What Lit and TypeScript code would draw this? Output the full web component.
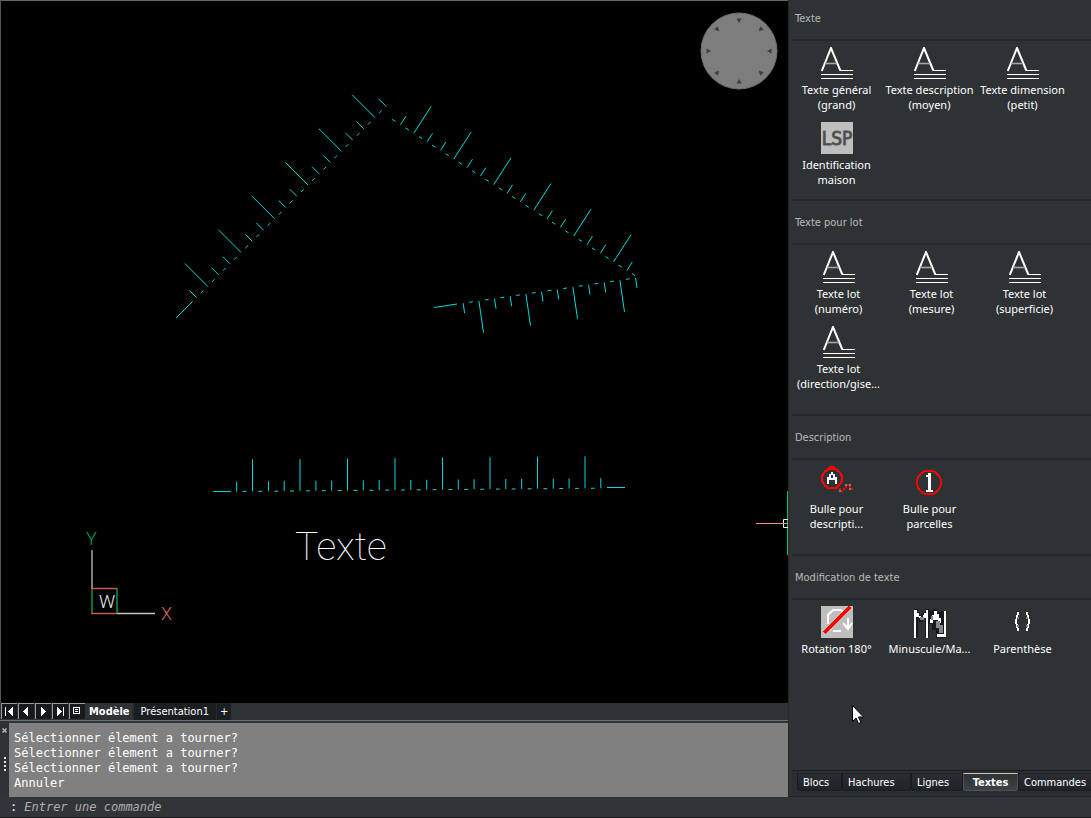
import { LitElement, html, svg, css, type TemplateResult, type SVGTemplateResult } from "lit";
import { customElement, property, state } from "lit/decorators.js";
import { classMap } from "lit/directives/class-map.js";

type Point = [number, number];

interface Ruler {
  origin: Point; // foot of the first tick
  step: Point; // distance between two ticks
  normal: Point; // unit direction of the ticks
  ticks: number;
  dashFrom: number;
  dashTo: number;
  ends: [Point, Point][];
}

interface Tool {
  icon: string;
  lines: string[];
}

interface Section {
  title: string;
  kind: string;
  tools: Tool[];
}

const RULERS: Ruler[] = [
  {
    origin: [196.5, 297.5], step: [11.15, -11.25], normal: [-0.71, -0.71],
    ticks: 18, dashFrom: 0, dashTo: 16, ends: [[[176, 318], [192.5, 301.5]]],
  },
  {
    origin: [400.5, 124.7], step: [13.32, 8.57], normal: [0.54, -0.84],
    ticks: 18, dashFrom: -1, dashTo: 17, ends: [],
  },
  {
    origin: [463.2, 303.2], step: [15.67, -2.3], normal: [0.145, 0.99],
    ticks: 12, dashFrom: 0, dashTo: 10, ends: [[[434, 307.5], [457, 304]]],
  },
  {
    origin: [236.7, 491.5], step: [15.83, -0.145], normal: [0, -1],
    ticks: 24, dashFrom: 0, dashTo: 22,
    ends: [[[213, 491.6], [231, 491.4]], [[607, 487.5], [625, 487.5]]],
  },
];

const SECTIONS: Section[] = [
  {
    title: "Texte", kind: "first",
    tools: [
      { icon: "text", lines: ["Texte général", "(grand)"] },
      { icon: "text", lines: ["Texte description", "(moyen)"] },
      { icon: "text", lines: ["Texte dimension", "(petit)"] },
      { icon: "lsp", lines: ["Identification", "maison"] },
    ],
  },
  {
    title: "Texte pour lot", kind: "inset",
    tools: [
      { icon: "text", lines: ["Texte lot", "(numéro)"] },
      { icon: "text", lines: ["Texte lot", "(mesure)"] },
      { icon: "text", lines: ["Texte lot", "(superficie)"] },
      { icon: "text", lines: ["Texte lot", "(direction/gise..."] },
    ],
  },
  {
    title: "Description", kind: "",
    tools: [
      { icon: "bubble", lines: ["Bulle pour", "descripti..."] },
      { icon: "parcel", lines: ["Bulle pour", "parcelles"] },
    ],
  },
  {
    title: "Modification de texte", kind: "",
    tools: [
      { icon: "rotate", lines: ["Rotation 180°"] },
      { icon: "case", lines: ["Minuscule/Ma..."] },
      { icon: "paren", lines: ["Parenthèse"] },
    ],
  },
];

const ICONS: Record<string, SVGTemplateResult> = {
  text: svg`
    <path d="M0.8 24 L10 1 L19.3 23.5" fill="none" stroke="#fff" stroke-width="2" />
    <path d="M4 16.5H16" stroke="#a4a6a8" stroke-width="1.6" />
    <path d="M19 23.5H32M0 27.5H32M0 31.5H32" stroke="#fff" />`,
  lsp: svg`
    <rect width="32" height="32" fill="#bebebe" />
    <text x="16" y="23" text-anchor="middle" font-family="DejaVu Sans Condensed, DejaVu Sans, sans-serif"
      font-size="19" fill="#3e3e3e" stroke="#5a5a5a">LSP</text>`,
  bubble: svg`
    <g shape-rendering="crispEdges">
      <circle cx="11" cy="12.5" r="10" fill="none" stroke="#f00" stroke-width="2" />
      <path d="M8 0h6v3h-6z" fill="#f00" />
      <path d="M10 6h2v2h2v3h2v7h-2v-4h-6v4h-2v-7h2v-3h2zM10 9h2v3h-2z" fill="#fff" fill-rule="evenodd" />
      <path d="M18 22h2v2h2v2h-2v-2h-2zM22 22h2v2h-2zM24 20h2v2h-2zM25 18h4v2h-4zM28 20h2v2h-2zM30 22h2v2h-2z" fill="#f00" />
      <path d="M18 24h2v2h-2zM24 18h2v2h-2zM28 18h2v2h-2zM28 22h2v2h-2z" fill="#808080" />
    </g>`,
  parcel: svg`
    <g shape-rendering="crispEdges">
      <circle cx="15" cy="16.5" r="12" fill="none" stroke="#f00" stroke-width="2" />
      <path d="M14 7h3v17h2v2h-7v-2h2v-13h-2v-2h2z" fill="#fff" />
    </g>`,
  rotate: svg`
    <rect width="32" height="32" fill="#bebebe" />
    <path d="M12 25H20M7 18V9L12 4H20L25 8M10 24L8 22" fill="none" stroke="#fff" stroke-width="2" />
    <path d="M27 12V23M22 17L27 23L31 17" fill="none" stroke="#fff" stroke-width="2" />
    <path d="M3 27L29 1" stroke="#f00" stroke-width="3.5" shape-rendering="crispEdges" />`,
  case: svg`
    <g shape-rendering="crispEdges">
      <path d="M0 3h4v3h2v3h2v-3h3v-3h5v2h3v-2h4v3h4v-1h5v27h-10v-8h-4v-6h-3v13h-4v-19h-2v4h-4v-4h-1v19h-4z" fill="#17191b" />
      <path d="M0 4h3v3h2v4h-3v21h-2zM12 4h2v28h-2v-20h-2v-5h2zM5 10h2v2h-2zM9 9h2v2h-2zM20 5h3v3h2v4h2v5h-3v-3h-5v3h-3v-4h2v-4h2zM30 5h2v26h-9v-3h7z" fill="#fff" />
      <path d="M6 11h4v3h-4zM22 15h4v4h3v8h-4v-5h-3zM17 10h2v4h-2z" fill="#858789" />
    </g>`,
  paren: svg`
    <g shape-rendering="crispEdges">
      <path d="M10 6h2v3h-1v4h-1v5h1v4h1v3h-2v-3h-1v-4h-1v-5h1v-4h1zM19 6h2v3h1v4h1v5h-1v4h-1v3h-2v-3h1v-4h1v-5h-1v-4h-1z" fill="#fff" />
      <path d="M10 11h2v2h-2zM10 19h2v2h-2zM19 11h2v2h-2zM19 19h2v2h-2z" fill="#808284" />
    </g>`,
};

function rulerPath(r: Ruler): string {
  const parts: string[] = [];
  const line = (a: Point, b: Point) =>
    parts.push(`M${a[0].toFixed(1)} ${a[1].toFixed(1)}L${b[0].toFixed(1)} ${b[1].toFixed(1)}`);
  const at = (k: number): Point => [r.origin[0] + r.step[0] * k, r.origin[1] + r.step[1] * k];
  for (let k = 0; k < r.ticks; k++) {
    const length = k % 3 === 1 ? 32 : 10;
    const [x, y] = at(k);
    line([x, y], [x + r.normal[0] * length, y + r.normal[1] * length]);
  }
  for (let k = r.dashFrom; k <= r.dashTo; k++) line(at(k + 0.38), at(k + 0.62));
  for (const [a, b] of r.ends) line(a, b);
  return parts.join("");
}

@customElement("cad-drawing")
export class CadDrawing extends LitElement {
  static styles = css`
    :host { display: block; position: relative; overflow: hidden; background: #000; border-top: 1px solid #666; border-left: 1px solid #555; }
    .sheet { position: absolute; top: -1px; left: -1px; width: 100%; height: 100%; overflow: visible; }
    .strokes { fill: none; stroke: #00dcdc; }
    .word { font: 100 39px Roboto, sans-serif; fill: #fff; }
    .axis { font: 300 18px Roboto, sans-serif; }
    .wheel { position: absolute; top: 11px; right: 10px; width: 78px; height: 78px; padding: 0; border: 0; background: none; }
    .wheel svg { display: block; }
  `;

  render() {
    return html`
      <svg class="sheet" role="img" aria-label="Dessin">
        ${RULERS.map((r) => svg`<path class="strokes" d=${rulerPath(r)} />`)}
        <text class="word" x="295" y="560">Texte</text>
        <g fill="none">
          <path d="M92 550V588" stroke="#aaa" stroke-width="1.5" />
          <path d="M117 613.5H155" stroke="#c4c4c4" stroke-width="1.5" />
          <path d="M92 588V613M117 588V613" stroke="#00994d" stroke-width="1.5" />
          <path d="M91 588.5H117M91 613.5H117" stroke="#c85a5a" stroke-width="1.5" />
        </g>
        <text class="axis" x="86" y="545" fill="#00a551">Y</text>
        <text class="axis" x="161" y="620" fill="#d26464">X</text>
        <text class="axis" x="99" y="608" fill="#eee">W</text>
        <path d="M787.5 491V555" stroke="#00c864" />
        <path d="M788 519.5H783.5V527.5H788" stroke="#fff" fill="none" />
        <path d="M756 523.5H788" stroke="#ff8c82" />
      </svg>
      <button class="wheel" aria-label="Navigation">
        <svg width="78" height="78" viewBox="-39 -39 78 78">
          <circle r="38" fill="#7d7d7d" stroke="#707070" />
          ${[0, 45, 90, 135, 180, 225, 270, 315].map(
            (a) => svg`<path transform="rotate(${a})" d="M-2.5 -32.5H2.5L0 -28Z" fill="#3c3f41" />`,
          )}
        </svg>
      </button>`;
  }
}

@customElement("layout-bar")
export class LayoutBar extends LitElement {
  static styles = css`
    :host { display: flex; height: 17px; padding-left: 1px; background: #2e3235; font: 11px "DejaVu Sans Condensed", "DejaVu Sans", sans-serif; color: #fff; border-bottom: 1px solid #6e7173; }
    button { font: inherit; color: inherit; border: 0; padding: 0; }
    .nav { display: flex; gap: 1px; }
    .step { width: 16px; height: 16px; background: #17191b; border-top: 1px solid #9a9c9e; border-left: 1px solid #9a9c9e; }
    .step svg { display: block; }
    .tabs { display: flex; }
    .tab { padding: 1px 7px 0; line-height: 16px; background: #1b1e21; border-left: 1px solid #25292c; white-space: nowrap; }
    .tab.active { padding: 1px 3px 0; background: #2e3235; border-color: #2e3235; font-weight: 700; }
    .tab.add { padding: 1px 3px 0; }
  `;

  private steps: [string, TemplateResult | SVGTemplateResult][] = [
    ["Premier", svg`<path d="M3 3h1v9h-1zM11 3v9l-5-4.500z" />`],
    ["Précédent", svg`<path d="M9 3v9l-5-4.500z" />`],
    ["Suivant", svg`<path d="M5 3v9l5-4.500z" />`],
    ["Dernier", svg`<path d="M4 3v9l5-4.500zM10 3h1v9h-1z" />`],
    ["Liste", svg`<path d="M3 3h7v7h-7zM4 4v5h5v-5zM5 5h3v1h-3zM5 7h3v1h-3z" fill-rule="evenodd" />`],
  ];

  render() {
    return html`
      <div class="nav">
        ${this.steps.map(
          ([name, glyph]) => html`<button class="step" aria-label=${name}>
            <svg width="15" height="15" fill="#fff" shape-rendering="crispEdges">${glyph}</svg>
          </button>`,
        )}
      </div>
      <div class="tabs">
        <button class="tab active">Modèle</button>
        <button class="tab">Présentation1</button>
        <button class="tab add" aria-label="Nouvelle présentation">+</button>
      </div>`;
  }
}

@customElement("command-history")
export class CommandHistory extends LitElement {
  static styles = css`
    :host { display: flex; margin-top: 2px; background: #2e3235; }
    .grip { width: 9px; display: flex; flex-direction: column; gap: 22px; align-items: center; padding-top: 5px; box-sizing: border-box; }
    .grip svg { display: block; }
    .close { border: 0; padding: 0; background: none; }
    .log { flex: 1; margin: 0; padding: 8px 5px 6px; background: #808080; color: #fff; font: 12px/15px "DejaVu Sans Mono", monospace; }
  `;

  render() {
    return html`
      <div class="grip">
        <button class="close" aria-label="Fermer">
          <svg width="5" height="5"><path d="M0.500 0.500L4.500 4.500M4.500 0.500L0.500 4.500" stroke="#b4b6b8" stroke-width="1.5" /></svg>
        </button>
        <svg width="2" height="18" shape-rendering="crispEdges"><path d="M1 2V18" stroke="#e6e6e6" stroke-width="2" stroke-dasharray="2 2" /></svg>
      </div>
      <pre class="log">${[
        "Sélectionner élement a tourner?",
        "Sélectionner élement a tourner?",
        "Sélectionner élement a tourner?",
        "Annuler",
      ].join("\n")}</pre>`;
  }
}

@customElement("tool-section")
export class ToolSection extends LitElement {
  @property({ attribute: false }) section!: Section;

  static styles = css`
    :host { display: block; }
    .title { margin: 0 0 0 3px; padding: 2px 0 0 3px; border-top: 2px solid #24282a; border-bottom: 2px solid #24282a; font: 11px/40px "DejaVu Sans Condensed", "DejaVu Sans", sans-serif; color: #b8babc; }
    .title.first { border-top: 0; padding-top: 0; line-height: 38px; padding-bottom: 1px; }
    .tools { display: grid; grid-template-columns: repeat(auto-fill, 93px); row-gap: 10px; padding: 6px 0 23px 1px; }
    .tools.first { padding-bottom: 12px; }
    .tools.inset { padding-left: 3px; }
    .tool { display: flex; flex-direction: column; align-items: center; gap: 3px; padding: 0; border: 0; background: none; color: #fff; font: 11px/15px "Noto Sans", sans-serif; white-space: nowrap; }
    .tool svg { display: block; }
    .label { display: flex; flex-direction: column; }
  `;

  render() {
    const { title, kind, tools } = this.section;
    const first = kind === "first";
    return html`
      <h2 class=${classMap({ title: true, first })}>${title}</h2>
      <div class=${classMap({ tools: true, first, inset: kind === "inset" })}>
        ${tools.map(
          (t) => html`<button class="tool">
            <svg width="32" height="32" aria-hidden="true">${ICONS[t.icon]}</svg>
            <span class="label">${t.lines.map((l) => html`<span>${l}</span>`)}</span>
          </button>`,
        )}
      </div>`;
  }
}

@customElement("tool-palette")
export class ToolPalette extends LitElement {
  @state() private active = "Textes";

  static styles = css`
    :host { display: flex; flex-direction: column; position: relative; box-sizing: border-box; background: #2e3235; border-left: 1px solid #24282a; border-bottom: 1px solid #212427; }
    .sections { flex: 1; min-height: 0; overflow: hidden; }
    .tabs { display: flex; margin-left: 3px; padding: 2px 0 5px 5px; border-top: 1px solid #191b1d; background: #2b2f32; overflow: hidden; }
    .tab { box-sizing: border-box; height: 18px; padding: 0 5px; border: 1px solid #181b1f; border-top-color: #202427; border-radius: 0 0 3px 3px; background: linear-gradient(#2a2e33, #1f2329); color: #fff; font: 11px/15px "DejaVu Sans Condensed", "DejaVu Sans", sans-serif; text-align: left; white-space: nowrap; flex: none; }
    .tab.blocs { width: 45px; }
    .tab.hachures { width: 69px; }
    .tab.lignes { width: 52px; }
    .tab.commandes { flex: 1; }
    .tab.active { width: 55px; border-color: #4c5154; border-top: 1px solid #c4c6c8; background: linear-gradient(#2e3235, #3c4144); font-weight: 700; text-align: center; }
    .pointer { position: absolute; left: 63px; top: 705px; }
  `;

  render() {
    return html`
      <div class="sections">
        ${SECTIONS.map((s) => html`<tool-section .section=${s}></tool-section>`)}
      </div>
      <nav class="tabs">
        ${["Blocs", "Hachures", "Lignes", "Textes", "Commandes"].map(
          (name) => html`<button
            class=${classMap({ tab: true, [name.toLowerCase()]: true, active: name === this.active })}
            @click=${() => (this.active = name)}
          >${name}</button>`,
        )}
      </nav>
      <svg class="pointer" width="12" height="20" aria-hidden="true">
        <path d="M0.500 0.500V16.500L4 13L6.500 18.500L9 17.500L6.500 12H11.500Z" fill="#fff" stroke="#000" />
      </svg>`;
  }
}

@customElement("app-root")
export class AppRoot extends LitElement {
  static styles = css`
    :host { display: flex; flex-direction: column; height: 100vh; background: #2e3235; }
    .work { flex: 1; min-height: 0; display: flex; }
    .main { flex: 1; min-width: 0; display: flex; flex-direction: column; }
    cad-drawing { flex: 1; }
    tool-palette { flex: 0 0 303px; min-width: 0; }
    .command { display: flex; align-items: center; height: 20px; padding-left: 10px; background: #313538; border-bottom: 1px solid #17191b; font: 12px "DejaVu Sans Mono", monospace; color: #fff; }
    .entry { flex: 1; margin-left: 7px; padding: 0; border: 0; outline: 0; background: none; color: #fff; font: italic 12px/15px "DejaVu Sans Mono", monospace; }
    .entry::placeholder { color: #acaeaf; opacity: 1; }
  `;

  render() {
    return html`
      <div class="work">
        <main class="main">
          <cad-drawing></cad-drawing>
          <layout-bar></layout-bar>
          <command-history></command-history>
        </main>
        <tool-palette></tool-palette>
      </div>
      <div class="command">
        <label for="entry">:</label>
        <input class="entry" id="entry" type="text" placeholder="Entrer une commande" />
      </div>`;
  }
}
